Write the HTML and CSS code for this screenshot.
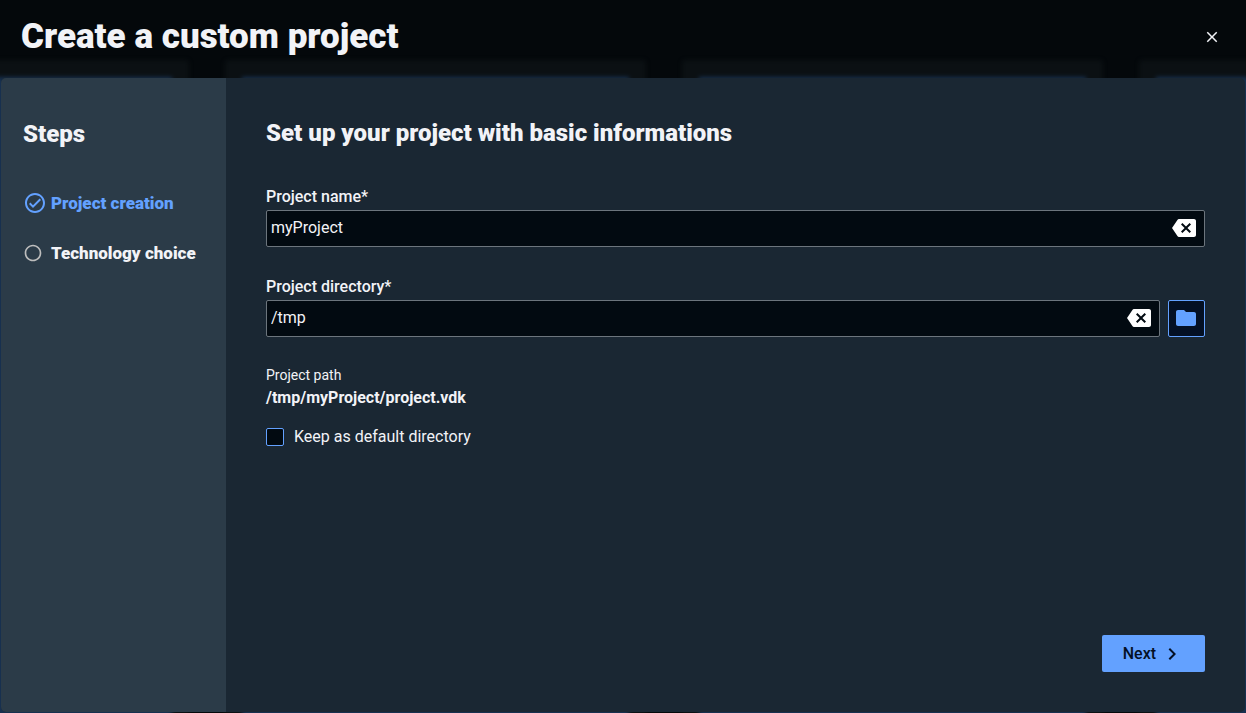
FILE: index.html
```html
<!DOCTYPE html>
<html lang="en">
<head>
    <meta charset="utf-8">
    <meta name="viewport" content="width=device-width, initial-scale=1">
    <title>Create a custom project</title>
    <link rel="stylesheet" href="styles.css">
</head>
<body>
    <!-- Blurred cards behind the dialog -->
    <div class="backdrop" aria-hidden="true">
        <div class="backdrop-grid">
            <div class="backdrop-card"></div>
            <div class="backdrop-card"></div>
            <div class="backdrop-card"></div>
            <div class="backdrop-card"></div>
        </div>
    </div>

    <div class="dialog" role="dialog" aria-labelledby="dialog-title">
        <header class="dialog-header">
            <h1 class="dialog-title" id="dialog-title">Create a custom project</h1>
            <button class="close-btn" type="button" aria-label="Close">
                <svg width="18" height="18" viewBox="0 0 24 24" fill="currentColor"><path d="M19 6.41L17.59 5 12 10.59 6.41 5 5 6.41 10.59 12 5 17.59 6.41 19 12 13.41 17.59 19 19 17.59 13.41 12z"/></svg>
            </button>
        </header>

        <div class="dialog-body">
            <aside class="steps">
                <h2 class="section-title">Steps</h2>
                <ol class="step-list">
                    <li class="step active">
                        <svg width="24" height="24" viewBox="0 0 24 24" fill="currentColor"><path d="M12 2C6.480 2 2 6.480 2 12s4.480 10 10 10 10-4.480 10-10S17.520 2 12 2zm0 18c-4.410 0-8-3.590-8-8s3.590-8 8-8 8 3.590 8 8-3.590 8-8 8zm4.590-12.420L10 14.170l-2.590-2.580L6 13l4 4 8-8z"/></svg>
                        <span>Project creation</span>
                    </li>
                    <li class="step">
                        <svg class="step-pending" width="20" height="20" viewBox="0 0 24 24" fill="currentColor"><path d="M12 2C6.480 2 2 6.480 2 12s4.480 10 10 10 10-4.480 10-10S17.520 2 12 2zm0 18c-4.420 0-8-3.580-8-8s3.580-8 8-8 8 3.580 8 8-3.580 8-8 8z"/></svg>
                        <span>Technology choice</span>
                    </li>
                </ol>
            </aside>

            <form class="setup">
                <h2 class="section-title">Set up your project with basic informations</h2>

                <div class="field">
                    <label for="project-name">Project name*</label>
                    <div class="text-box">
                        <input type="text" id="project-name" value="myProject">
                        <button class="clear-btn" type="button" aria-label="Clear project name">
                            <svg width="24" height="24" viewBox="0 0 24 24" fill="currentColor"><path d="M22 3H7c-.69 0-1.230.350-1.590.880L0 12l5.410 8.110c.360.530.900.890 1.590.890h15c1.100 0 2-.900 2-2V5c0-1.100-.900-2-2-2zm-3 12.590L17.590 17 14 13.410 10.410 17 9 15.590 12.590 12 9 8.410 10.410 7 14 10.590 17.590 7 19 8.410 15.410 12 19 15.590z"/></svg>
                        </button>
                    </div>
                </div>

                <div class="field">
                    <label for="project-directory">Project directory*</label>
                    <div class="field-row">
                        <div class="text-box">
                            <input type="text" id="project-directory" value="/tmp">
                            <button class="clear-btn" type="button" aria-label="Clear project directory">
                                <svg width="24" height="24" viewBox="0 0 24 24" fill="currentColor"><path d="M22 3H7c-.69 0-1.230.350-1.590.880L0 12l5.410 8.110c.360.530.900.890 1.590.890h15c1.100 0 2-.900 2-2V5c0-1.100-.900-2-2-2zm-3 12.590L17.590 17 14 13.410 10.410 17 9 15.590 12.590 12 9 8.410 10.410 7 14 10.590 17.590 7 19 8.410 15.410 12 19 15.590z"/></svg>
                            </button>
                        </div>
                        <button class="folder-btn" type="button" aria-label="Choose directory">
                            <svg width="24" height="24" viewBox="0 0 24 24" fill="currentColor"><path d="M10 4H4c-1.100 0-1.990.900-1.990 2L2 18c0 1.100.900 2 2 2h16c1.100 0 2-.900 2-2V8c0-1.100-.900-2-2-2h-8l-2-2z"/></svg>
                        </button>
                    </div>
                </div>

                <div class="path">
                    <span class="path-label">Project path</span>
                    <span class="path-value">/tmp/myProject/project.vdk</span>
                </div>

                <label class="default-directory">
                    <input type="checkbox" id="default-directory">
                    <span>Keep as default directory</span>
                </label>

                <div class="actions">
                    <button class="next-btn" type="submit">
                        <span>Next</span>
                        <svg width="24" height="24" viewBox="0 0 24 24" fill="currentColor"><path d="M10 6L8.590 7.410 13.170 12l-4.580 4.590L10 18l6-6z"/></svg>
                    </button>
                </div>
            </form>
        </div>
    </div>
</body>
</html>
```
FILE: styles.css
```css
:root {
    --bg-color: #04080b;
    --panel-color: #1a2733;
    --steps-color: #2b3b48;
    --input-color: #020a11;
    --border-color: #6c757d;
    --text-color: #f2f3f7;
    --primary-color: #63a1ff;
    --dark-text: #041024;
}

* {
    box-sizing: border-box;
}

body {
    margin: 0;
    font-family: Roboto, sans-serif;
    font-size: 16px;
    line-height: 20px;
    background: var(--bg-color);
    color: var(--text-color);
}

h1, h2 {
    margin: 0;
    font-weight: 900;
}

button {
    font: inherit;
    border: none;
    padding: 0;
    background: none;
    color: inherit;
    cursor: pointer;
}

svg {
    display: block;
    flex: none;
}

.backdrop {
    position: absolute;
    inset: 0;
    overflow: hidden;
}

.backdrop-grid {
    display: grid;
    grid-template-columns: repeat(4, 1fr);
    gap: 36px;
    height: 100%;
    margin: 60px -314px 0 -232px;
    filter: blur(2px);
}

.backdrop-card {
    background: #17304f;
    border: 17px solid #0b1013;
    border-radius: 4px;
}

.dialog {
    position: relative;
    display: flex;
    flex-direction: column;
    min-height: 100vh;
    padding: 0 1px 1px;
}

.dialog-header {
    display: flex;
    align-items: center;
    justify-content: space-between;
    height: 78px;
    padding: 0 24px 4px 20px;
}

.dialog-title {
    font-size: 35px;
    line-height: 42px;
}

.dialog-body {
    flex: 1;
    display: flex;
    border-radius: 5px;
    overflow: hidden;
    background: var(--panel-color);
}

.steps {
    width: 225px;
    padding: 41px 22px;
    background: var(--steps-color);
}

.section-title {
    font-size: 24px;
    line-height: 30px;
}

.step-list {
    display: grid;
    gap: 26px;
    list-style: none;
    margin: 42px 0 0;
    padding: 0;
    font-size: 17px;
    font-weight: 900;
}

.step {
    display: flex;
    align-items: center;
    gap: 4px;
    height: 24px;
}

.step.active {
    color: var(--primary-color);
}

.step-pending {
    margin-right: 4px;
    color: #bdbdbd;
}

.setup {
    flex: 1;
    display: flex;
    flex-direction: column;
    padding: 40px;
}

.field {
    margin-top: 30px;
}

.section-title + .field {
    margin-top: 39px;
}

.field label {
    display: block;
    margin-bottom: 3px;
    font-weight: 500;
}

.field-row {
    display: flex;
    gap: 8px;
}

.text-box {
    flex: 1;
    display: flex;
    align-items: center;
    height: 37px;
    padding: 0 8px 1px 4px;
    background: var(--input-color);
    border: 1px solid var(--border-color);
    border-radius: 2px;
}

.text-box input {
    flex: 1;
    min-width: 0;
    padding: 0;
    border: none;
    outline: none;
    background: none;
    color: inherit;
    font: inherit;
}

.clear-btn {
    color: #ffffff;
}

.folder-btn {
    display: grid;
    place-items: center;
    width: 37px;
    height: 37px;
    padding: 0 1px 1px 0;
    border: 1px solid var(--primary-color);
    border-radius: 2px;
    background: var(--dark-text);
    color: var(--primary-color);
}

.path {
    display: grid;
    gap: 3px;
    margin-top: 28px;
}

.path-label {
    font-size: 14px;
}

.path-value {
    font-weight: 700;
}

.default-directory {
    display: flex;
    align-items: center;
    align-self: flex-start;
    gap: 10px;
    margin-top: 19px;
}

.default-directory input {
    appearance: none;
    width: 18px;
    height: 18px;
    margin: 0;
    border: 1px solid var(--primary-color);
    border-radius: 2px;
    background: var(--input-color);
}

.default-directory input:checked {
    background: var(--primary-color);
}

.actions {
    display: flex;
    justify-content: flex-end;
    margin-top: auto;
}

.next-btn {
    display: flex;
    align-items: center;
    gap: 4px;
    height: 37px;
    padding: 0 21px;
    border-radius: 2px;
    background: var(--primary-color);
    color: var(--dark-text);
    font-weight: 500;
}
```
